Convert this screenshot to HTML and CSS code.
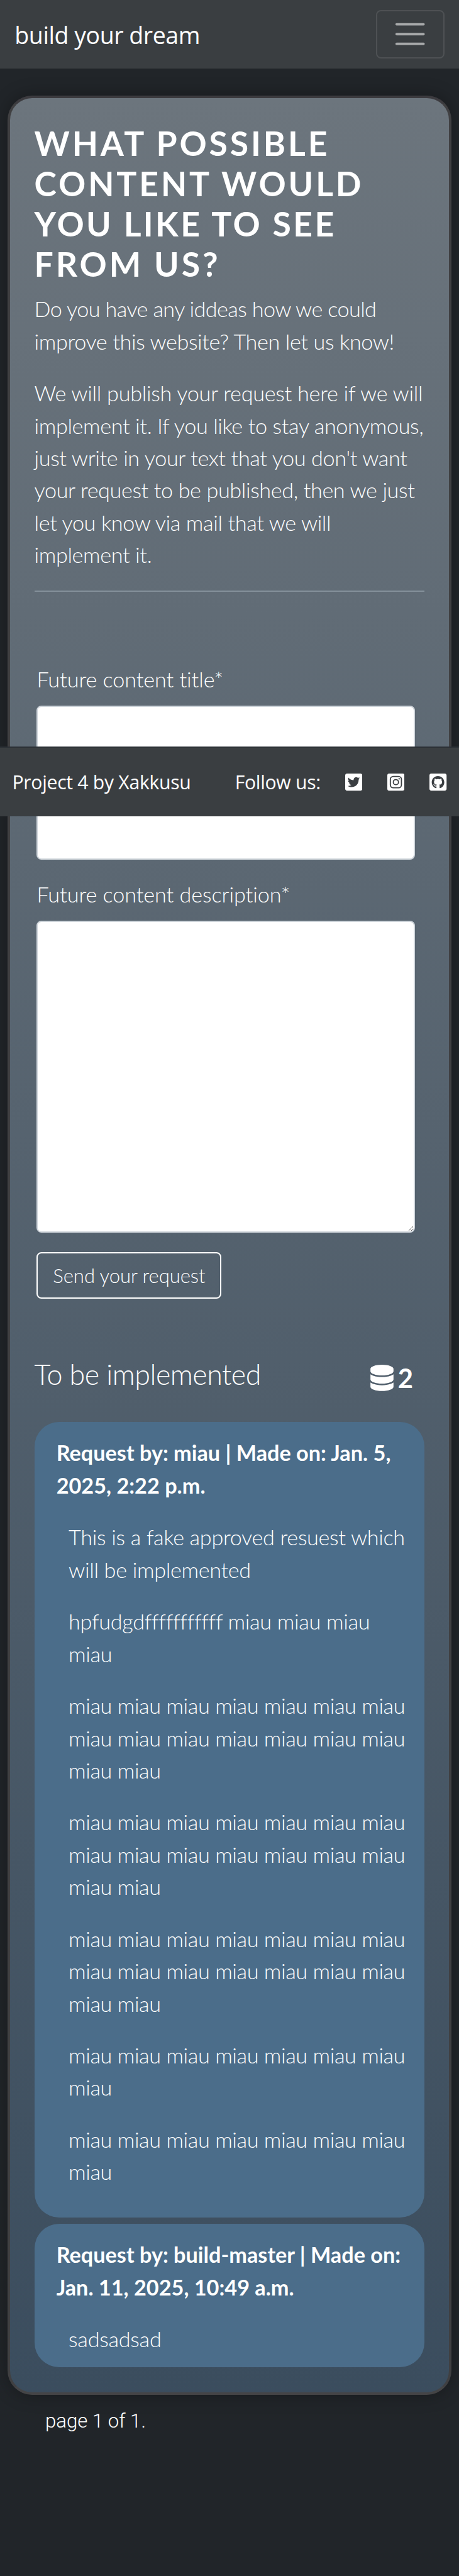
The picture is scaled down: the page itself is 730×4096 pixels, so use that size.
FILE: index.html
```html
<!DOCTYPE html>
<html lang="en">
<head>
<meta charset="utf-8">
<title>build your dream</title>
<link rel="stylesheet" href="styles.css">
</head>
<body>
<nav class="navbar">
  <a class="brand">build your dream</a>
  <button class="toggler" aria-label="Menu">
    <svg class="toggler-icon" viewBox="0 0 30 30"><path d="M4 7h22M4 15h22M4 23h22" fill="none" stroke="#fff" stroke-opacity=".55" stroke-width="2" stroke-linecap="round" stroke-miterlimit="10"/></svg>
  </button>
</nav>
<main class="panel">
  <h1 class="title">What possible<br>content would<br><span class="title-tight">you like to see</span><br>from us?</h1>
  <div class="intro">
    <p><span class="tight">Do you have any iddeas how we could</span><br>improve this website? Then let us know!</p>
    <p><span class="wide">We will publish your request here if we will</span><br>implement it. If you like to stay anonymous,<br>just write in your text that you don't want<br>your request to be published, then we just<br>let you know via mail that we will<br>implement it.</p>
  </div>
  <hr class="rule">
  <form class="form">
    <label class="label">Future content title*</label>
    <div class="field field-title"></div>
    <label class="label">Future content description*</label>
    <textarea class="field field-text"></textarea>
    <button class="send" type="button">Send your request</button>
  </form>
  <div class="list-head">
    <h2 class="list-title">To be implemented</h2>
    <div class="count">
      <svg class="db" viewBox="0 0 448 512"><path fill="#fff" d="M448 80v48c0 44.200-100.300 80-224 80S0 172.200 0 128V80C0 35.800 100.300 0 224 0s224 35.800 224 80zM393.200 214.700c20.800-7.400 39.900-16.900 54.800-28.600V288c0 44.200-100.300 80-224 80S0 332.200 0 288V186.100c14.900 11.800 34 21.200 54.800 28.600C99.700 230.700 159.500 240 224 240s124.300-9.300 169.200-25.300zM0 346.100c14.900 11.800 34 21.200 54.800 28.600C99.700 390.700 159.500 400 224 400s124.300-9.300 169.200-25.300c20.800-7.400 39.900-16.900 54.800-28.600V432c0 44.200-100.300 80-224 80S0 476.200 0 432V346.100z"/></svg>
      <span>2</span>
    </div>
  </div>
  <section class="cards">
    <article class="card card-long">
      <strong class="card-head">Request by: miau | Made on: Jan. 5,<br>2025, 2:22 p.m.</strong>
      <p class="loose">This is a fake approved resuest which<br>will be implemented</p>
      <p class="loose">hpfudgdfffffffffff miau miau miau<br>miau</p>
      <p>miau miau miau miau miau miau miau<br>miau miau miau miau miau miau miau<br>miau miau</p>
      <p>miau miau miau miau miau miau miau<br>miau miau miau miau miau miau miau<br>miau miau</p>
      <p>miau miau miau miau miau miau miau<br>miau miau miau miau miau miau miau<br>miau miau</p>
      <p>miau miau miau miau miau miau miau<br>miau</p>
      <p>miau miau miau miau miau miau miau<br>miau</p>
    </article>
    <article class="card">
      <strong class="card-head">Request by: build-master | Made on:<br>Jan. 11, 2025, 10:49 a.m.</strong>
      <p>sadsadsad</p>
    </article>
  </section>
</main>
<div class="pages">page 1 of 1.</div>
<footer class="footer">
  <span class="credit">Project 4 by Xakkusu</span>
  <span class="follow">Follow us:</span>
  <div class="social">
    <svg viewBox="0 32 448 448"><path fill="#fff" d="M400 32H48C21.500 32 0 53.500 0 80v352c0 26.500 21.500 48 48 48h352c26.500 0 48-21.500 48-48V80c0-26.500-21.500-48-48-48zm-48.900 158.800c.2 2.800.2 5.700.2 8.500 0 86.700-66 186.600-186.600 186.600-37.200 0-71.700-10.800-100.700-29.400 5.300.6 10.400.8 15.800.8 30.700 0 58.900-10.400 81.400-28-28.800-.6-53-19.500-61.300-45.500 10.100 1.500 19.200 1.500 29.600-1.200-30-6.100-52.500-32.500-52.500-64.400v-.8c8.700 4.900 18.900 7.900 29.600 8.300a65.447 65.447 0 0 1-29.200-54.600c0-12.200 3.200-23.400 8.900-33.100 32.300 39.800 80.800 65.800 135.200 68.600-9.300-44.500 24-80.600 64-80.600 18.900 0 35.900 7.900 47.900 20.700 14.800-2.800 29-8.300 41.600-15.800-4.900 15.200-15.200 28-28.800 36.100 13.200-1.400 26-5.100 37.800-10.200-8.900 13.100-20.100 24.700-32.900 34z"/></svg>
    <svg viewBox="0 32 448 448"><path fill="#fff" fill-rule="evenodd" d="M48 32H400A48 48 0 0 1 448 80V432A48 48 0 0 1 400 480H48A48 48 0 0 1 0 432V80A48 48 0 0 1 48 32zM156 93A92 92 0 0 0 64 185V327A92 92 0 0 0 156 419H292A92 92 0 0 0 384 327V185A92 92 0 0 0 292 93zM156 123H292A62 62 0 0 1 354 185V327A62 62 0 0 1 292 389H156A62 62 0 0 1 94 327V185A62 62 0 0 1 156 123z"/><circle cx="224" cy="256" r="67.500" fill="none" stroke="#3a3e41" stroke-width="29"/><circle cx="309.400" cy="170.500" r="19.100" fill="#3a3e41"/></svg>
    <svg viewBox="0 32 448 448"><path fill="#fff" d="M400 32H48C21.500 32 0 53.500 0 80v352c0 26.500 21.500 48 48 48h352c26.500 0 48-21.500 48-48V80c0-26.500-21.500-48-48-48zM277.300 415.700c-8.400 1.500-11.500-3.700-11.500-8 0-5.400.2-33 .2-55.300 0-15.600-5.200-25.500-11.300-30.700 37-4.100 76-9.200 76-73.100 0-18.200-6.500-27.300-17.100-39 1.700-4.300 7.400-22-1.700-45-13.900-4.300-45.700 17.900-45.700 17.900-13.200-3.700-27.500-5.600-41.600-5.600-14.100 0-28.400 1.900-41.600 5.600 0 0-31.800-22.200-45.700-17.900-9.100 22.900-3.500 40.600-1.700 45-10.600 11.700-15.600 20.800-15.600 39 0 63.600 37.300 69 74.300 73.100-4.800 4.300-9.100 11.700-10.600 22.300-9.500 4.300-33.800 11.700-48.300-13.900-9.100-15.800-25.500-17.100-25.500-17.100-16.200-.2-1.100 10.200-1.100 10.200 10.800 5 18.400 24.200 18.400 24.200 9.700 29.700 56.100 19.700 56.100 19.700 0 13.900.2 36.500.2 40.600 0 4.300-3 9.500-11.500 8-66-22.100-112.200-84.900-112.200-158.300 0-91.800 70.200-161.500 162-161.500S388 165.600 388 257.400c.1 73.400-44.700 136.300-110.700 158.300z"/></svg>
  </div>
</footer>
</body>
</html>
```

FILE: styles.css
```css
html { font-size: 9.7333px; }
* { box-sizing: border-box; }
body {
  margin: 0;
  position: relative;
  height: 4096px;
  overflow: hidden;
  background: #212529;
  color: #fff;
  font-family: Lato, sans-serif;
  font-size: 3.52rem;
  font-weight: 300;
  line-height: 5.28rem;
  white-space: nowrap;
}
p { margin: 0 0 3.2rem; }
.navbar {
  height: 11.2rem;
  padding: 0 2.4rem;
  display: flex;
  align-items: center;
  justify-content: space-between;
  background: #3a3e41;
}
.brand { padding-top: .3rem; font: 400 3.85rem/6rem "Open Sans", sans-serif; letter-spacing: -.045rem; }
.toggler {
  width: 11.2rem;
  height: 8rem;
  padding: 0;
  display: flex;
  align-items: center;
  justify-content: center;
  background: none;
  border: 2px solid rgba(255,255,255,.1);
  border-radius: .8rem;
}
.toggler-icon { width: 6rem; height: 6rem; }
.panel {
  margin: 4.4rem 1.2rem 0;
  height: 375.6rem;
  padding: 4rem;
  border: 4px solid;
  border-color: #3c3b3f #404042 #444446;
  border-radius: 4rem;
  background: linear-gradient(#6c757d, #3b4d5e);
  box-shadow: 0 0 3rem rgba(0,0,0,.3);
}
.title {
  margin: 0 0 1.4rem;
  font-size: 5.5rem;
  line-height: 6.6rem;
  font-weight: 700;
  letter-spacing: .4rem;
  text-transform: uppercase;
}
.title-tight { letter-spacing: .35rem; }
.intro { letter-spacing: -.042rem; }
.tight { letter-spacing: -.065rem; }
.wide { letter-spacing: -.03rem; }
.rule { margin: .2rem 0 0; border: 0; height: 2px; background: #84909a; }
.form { padding: 11.6rem 1.6rem 0 .4rem; display: flex; flex-direction: column; align-items: flex-start; }
.label { margin-bottom: 1.7rem; letter-spacing: -.01rem; }
.field {
  width: 100%;
  background: #fff;
  border: 2px solid #ced4da;
  border-radius: .8rem;
}
.field-title { height: 25.2rem; margin-bottom: 3rem; }
.field-text { height: 51rem; display: block; margin-bottom: 3.2rem; }
.send {
  width: 30.2rem;
  height: 7.6rem;
  padding: 0;
  color: #fff;
  font: 300 3.2rem/4.8rem Lato, sans-serif;
  letter-spacing: -.01rem;
  background: none;
  border: 2px solid #fff;
  border-radius: .8rem;
}
.list-head { margin-top: 9.3rem; height: 6rem; display: flex; justify-content: space-between; align-items: flex-start; padding-right: 1.9rem; }
.list-title { margin: 0; font-size: 4.6rem; font-weight: 300; line-height: 6rem; letter-spacing: -.05rem; }
.count { padding-top: .6rem; display: flex; align-items: center; gap: .7rem; font-size: 4.3rem; font-weight: 700; line-height: 6rem; }
.db { width: 3.8rem; height: 4.3rem; }
.cards { margin-top: 4.8rem; display: grid; grid-template-columns: minmax(0, 1fr); gap: 1rem; }
.card { height: 23.4rem; padding: 2.4rem 3.6rem 0; background: #4b6d8a; border-radius: 4rem; }
.card-long { height: 130rem; }
.card p { margin-left: 2rem; letter-spacing: -.045rem; }
.card .loose { letter-spacing: -.035rem; }
.card-head { display: block; font-weight: 700; margin-bottom: 3.2rem; }
.card-head + p { letter-spacing: -.03rem; }
.pages { margin: 2rem 0 0 7.4rem; font: 300 3.2rem/4.8rem Roboto, sans-serif; }
.footer {
  position: absolute;
  left: 0;
  right: 0;
  top: 122rem;
  height: 11.4rem;
  padding: 0 2rem;
  display: flex;
  align-items: center;
  background: #3a3e41;
  border-top: 2px solid #2b3035;
  font: 400 3.1rem/4.8rem "Open Sans", sans-serif;
  letter-spacing: -.03rem;
}
.credit { width: 36.4rem; }
.follow { flex: 1; }
.social { display: flex; gap: 4.1rem; }
.social svg { width: 2.8rem; height: 2.8rem; }
```
